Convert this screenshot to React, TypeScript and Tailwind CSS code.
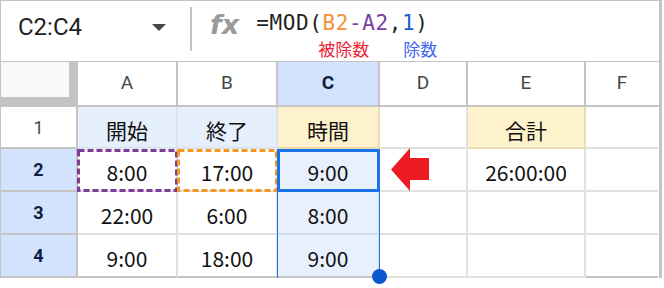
import React from 'react';

const COLS = [78, 100, 100, 102, 88, 118, 75];
const cellFont = { fontFamily: '"Noto Sans CJK JP", "Noto Sans", sans-serif' };

function DashedBox({ color }: { color: string }) {
    return (
        <svg className="absolute -left-[1px] top-0 pointer-events-none" width="101" height="43" viewBox="0 0 101 43">
            <rect x="1.5" y="1.5" width="98" height="40" fill="none" stroke={color} strokeWidth="3" strokeDasharray="6 3" />
        </svg>
    );
}

function RedArrow() {
    return (
        <svg width="38" height="43" viewBox="0 0 38 43">
            <polygon points="0,21.5 19,0 19,10 38,10 38,32 19,32 19,43" fill="#ed1c24" />
        </svg>
    );
}

export default function App() {
    return (
        <div className="w-[664px] h-[288px] bg-white">
            <div className="w-[662px] border-l border-t border-r-[3px] border-[#c4c4c4]">
                {/* Formula bar */}
                <div className="h-[61px] flex border-b border-[#c4c4c4]">
                    <div className="w-[189px] flex items-center justify-between pl-[17px] pr-[24px] pb-[8px]">
                        <span className="text-[24px] text-[#1f1f1f]" style={{ fontFamily: 'Roboto, sans-serif' }}>C2:C4</span>
                        <span className="w-0 h-0 border-l-[7px] border-r-[7px] border-t-[7px] border-l-transparent border-r-transparent border-t-[#444746]" />
                    </div>
                    <div className="w-[2px] h-[44px] mt-[6px] bg-[#c4c4c4]" />
                    <div className="flex items-start pl-[18px] pt-[10px]">
                        <span className="text-[27px] leading-none italic font-bold text-[#9a9a9a]" style={{ fontFamily: '"DejaVu Sans", sans-serif' }}>fx</span>
                    </div>
                    <div className="flex flex-col pl-[17px] pt-[9px]">
                        <div className="text-[21px] leading-[26px] tracking-[0.6px] text-[#1f1f1f]" style={{ fontFamily: '"DejaVu Sans Mono", monospace' }}>
                            <span>=MOD(</span>
                            <span className="text-[#f5913c]">B2</span>
                            <span className="text-[#7b3f9e]">-A2</span>
                            <span>,</span>
                            <span className="text-[#1a5fd0]">1</span>
                            <span>)</span>
                        </div>
                        <div className="flex text-[17px] leading-[20px] pl-[62px] mt-[3px]" style={cellFont}>
                            <span className="text-[#ee1f36]">被除数</span>
                            <span className="ml-[34px] text-[#4466ee]">除数</span>
                        </div>
                    </div>
                </div>

                {/* Column header row */}
                <div className="flex h-[45px] border-b-2 border-[#c4c4c4]" style={{ fontFamily: 'Roboto, sans-serif' }}>
                    <div className="h-full border-r-[9px] border-b-[8px] border-[#c4c4c4] bg-[#f8f9fa]" style={{ width: COLS[0] - 1 }} />
                    {['A', 'B', 'C', 'D', 'E', 'F'].map((c, i) => (
                        <div
                            key={c}
                            className={`flex items-center justify-center text-[19px] ${i < 5 ? 'border-r-2 border-[#c4c4c4]' : ''} ${c === 'C' ? 'bg-[#d3e3fd] font-bold text-[#0b1f44]' : 'text-[#444746]'}`}
                            style={{ width: COLS[i + 1] - (i === 5 ? 3 : 0) }}
                        >
                            {c}
                        </div>
                    ))}
                </div>

                {/* Row 1 */}
                <div className="flex h-[42px]" style={cellFont}>
                    <RowHead n="1" />
                    <div className="flex items-end justify-center pb-[6px] text-[21px] leading-none text-[#111] bg-[#e6effc] border-r-2 border-b-2 border-[#dde3ec] w-[100px]">開始</div>
                    <div className="flex items-end justify-center pb-[6px] text-[21px] leading-none text-[#111] bg-[#e6effc] border-r-2 border-b-2 border-[#dde3ec] w-[100px]">終了</div>
                    <div className="flex items-end justify-center pb-[6px] text-[21px] leading-none text-[#111] bg-[#fef2cc] border-r-2 border-b-2 border-[#eadcb0] w-[102px]">時間</div>
                    <div className="border-r-2 border-b-2 border-[#e1e1e1] w-[88px]" />
                    <div className="flex items-end justify-center pb-[6px] text-[21px] leading-none text-[#111] bg-[#fef2cc] border-r-2 border-b-2 border-[#eadcb0] w-[118px]">合計</div>
                    <div className="border-b-2 border-[#e1e1e1] w-[72px]" />
                </div>

                {/* Row 2 */}
                <div className="flex h-[43px]" style={cellFont}>
                    <RowHead n="2" sel />
                    <div className="relative flex items-end justify-center pb-[7px] text-[21px] leading-none text-[#111] border-r-2 border-b-2 border-[#e1e1e1] w-[100px]">
                        8:00
                        <DashedBox color="#7e3b98" />
                    </div>
                    <div className="relative flex items-end justify-center pb-[7px] text-[21px] leading-none text-[#111] border-r-2 border-b-2 border-[#e1e1e1] w-[100px]">
                        17:00
                        <DashedBox color="#f39a24" />
                    </div>
                    <div className="relative flex items-end justify-center pb-[7px] text-[21px] leading-none text-[#111] bg-[#e8f0fe] border-r-2 border-b-2 border-[#e1e1e1] w-[102px]">
                        9:00
                        <div className="absolute -left-[1px] top-0 -right-[2px] -bottom-[2px] border-[3px] border-[#1a73e8]" />
                    </div>
                    <div className="flex items-center pl-[11px] border-r-2 border-b-2 border-[#e1e1e1] w-[88px]">
                        <RedArrow />
                    </div>
                    <div className="flex items-end justify-center pb-[7px] text-[21px] leading-none text-[#111] border-r-2 border-b-2 border-[#e1e1e1] w-[118px]">26:00:00</div>
                    <div className="border-b-2 border-[#e1e1e1] w-[72px]" />
                </div>

                {/* Rows 3, 4 */}
                {[['3', '22:00', '6:00', '8:00'], ['4', '9:00', '18:00', '9:00']].map(([n, a, b, c], r) => {
                    const last = r === 1;
                    const bb = last ? 'border-[#c4c4c4]' : 'border-[#e1e1e1]';
                    return (
                        <div key={n} className="flex h-[43px]" style={cellFont}>
                            <RowHead n={n} sel />
                            <div className={`flex items-end justify-center pb-[7px] text-[21px] leading-none text-[#111] border-r-2 border-b-2 border-[#e1e1e1] ${last ? 'border-b-[#c4c4c4]' : ''} w-[100px]`}>{a}</div>
                            <div className={`flex items-end justify-center pb-[7px] text-[21px] leading-none text-[#111] border-r-2 border-b-2 border-[#e1e1e1] ${last ? 'border-b-[#c4c4c4]' : ''} w-[100px]`}>{b}</div>
                            <div className={`relative flex items-end justify-center pb-[7px] text-[21px] leading-none text-[#111] bg-[#e8f0fe] border-r-2 border-b-2 border-[#d3dcea] ${last ? 'border-b-[#c4c4c4]' : ''} w-[102px]`}>
                                {c}
                                <div className="absolute -left-[1px] top-0 -right-[2px] -bottom-[2px] border-l border-r border-[#1a73e8]" />
                                {last && <div className="absolute left-[94px] top-[34px] w-[15px] h-[15px] rounded-full bg-[#0b57d0] z-10" />}
                            </div>
                            <div className={`border-r-2 border-b-2 border-[#e1e1e1] ${bb} w-[88px]`} />
                            <div className={`border-r-2 border-b-2 border-[#e1e1e1] ${bb} w-[118px]`} />
                            <div className={`border-b-2 ${bb} w-[72px]`} />
                        </div>
                    );
                })}
            </div>
        </div>
    );
}

function RowHead({ n, sel }: { n: string; sel?: boolean }) {
    return (
        <div
            className={`flex items-center justify-center text-[18px] border-r-2 border-b-2 border-[#c4c4c4] ${sel ? 'bg-[#d3e3fd] font-bold text-[#0b1f44]' : 'bg-white text-[#444746]'}`}
            style={{ width: 77, fontFamily: 'Roboto, sans-serif' }}
        >
            {n}
        </div>
    );
}
